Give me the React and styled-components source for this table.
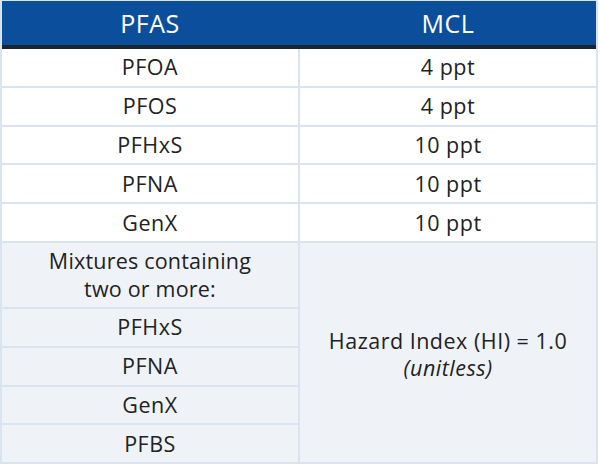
import React from "react";
import styled, { createGlobalStyle } from "styled-components";

const GlobalStyle = createGlobalStyle`
  body {
    margin: 0;
    background: #fff;
    font-family: "Open Sans", "Noto Sans", sans-serif;
  }
`;

const Table = styled.div`
  width: 598px;
  display: grid;
  grid-template-columns: 296px 296px;
  column-gap: 2px;
  row-gap: 2px;
  padding: 1px 2px 2px;
  background: #d9e4f0;
  box-sizing: border-box;
`;

const Head = styled.div`
  grid-column: 1 / 3;
  display: grid;
  grid-template-columns: 296px 296px;
  column-gap: 2px;
  background: #0b4f9c;
  border-bottom: 4px solid #1b2532;
  margin-bottom: -2px;
`;

const HeadCell = styled.div`
  height: 44px;
  display: flex;
  align-items: center;
  justify-content: center;
  color: #fff;
  font-size: 25px;
  letter-spacing: 0.5px;
`;

const Cell = styled.div`
  min-height: 36.8px;
  display: flex;
  align-items: center;
  justify-content: center;
  text-align: center;
  font-size: 21.5px;
  letter-spacing: 0.5px;
  line-height: 28px;
  color: #222;
  background: ${(p) => (p.shaded ? "#eff3f8" : "#fff")};
`;

const MixCell = styled(Cell)`
  min-height: 64px;
  letter-spacing: 0.2px;
`;

const HazardCell = styled(Cell)`
  grid-column: 2;
  grid-row: ${(p) => p.rows};
  flex-direction: column;
  line-height: 27px;
  padding-top: 2px;
`;

const Note = styled.em`
  font-style: italic;
`;

const singles = [
  ["PFOA", "4 ppt"],
  ["PFOS", "4 ppt"],
  ["PFHxS", "10 ppt"],
  ["PFNA", "10 ppt"],
  ["GenX", "10 ppt"],
];

const mixture = ["PFHxS", "PFNA", "GenX", "PFBS"];

export default function App() {
  return (
    <>
      <GlobalStyle />
      <Table>
        <Head>
          <HeadCell>PFAS</HeadCell>
          <HeadCell>MCL</HeadCell>
        </Head>
        {singles.map(([name, mcl]) => (
          <React.Fragment key={name}>
            <Cell>{name}</Cell>
            <Cell>{mcl}</Cell>
          </React.Fragment>
        ))}
        <MixCell shaded style={{ gridColumn: 1 }}>
          Mixtures containing
          <br />
          two or more:
        </MixCell>
        <HazardCell shaded rows="7 / 12">
          <div>Hazard Index (HI) = 1.0</div>
          <Note>(unitless)</Note>
        </HazardCell>
        {mixture.map((name) => (
          <Cell shaded key={name} style={{ gridColumn: 1 }}>
            {name}
          </Cell>
        ))}
      </Table>
    </>
  );
}
